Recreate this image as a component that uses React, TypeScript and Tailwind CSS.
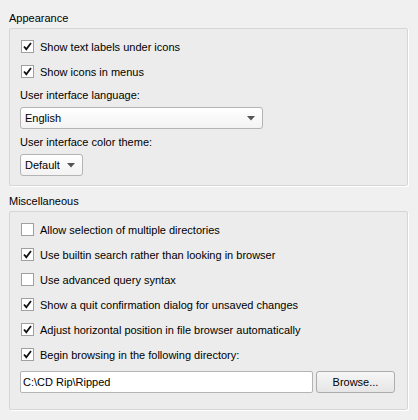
import React from "react";

type Opt = { label: string; checked: boolean };

const misc: Opt[] = [
  { label: "Allow selection of multiple directories", checked: false },
  { label: "Use builtin search rather than looking in browser", checked: true },
  { label: "Use advanced query syntax", checked: false },
  { label: "Show a quit confirmation dialog for unsaved changes", checked: true },
  { label: "Adjust horizontal position in file browser automatically", checked: true },
  { label: "Begin browsing in the following directory:", checked: true },
];

function CheckBox({ label, checked }: Opt) {
  return (
    <label className="flex h-[13px] items-center gap-[6px]">
      <span className="flex h-[13px] w-[13px] shrink-0 items-center justify-center border border-[#a0a0a0] bg-white">
        {checked && (
          <svg width="9" height="9" viewBox="0 0 9 9">
            <path d="M1 4.5 L3.3 7.2 L8 1" fill="none" stroke="#111" strokeWidth="1.8" />
          </svg>
        )}
      </span>
      <span className="whitespace-nowrap">{label}</span>
    </label>
  );
}

function Arrow() {
  return (
    <svg width="8" height="5" viewBox="0 0 8 5">
      <path d="M0 0 H8 L4 4.5 Z" fill="#555" />
    </svg>
  );
}

function Group({ title, children, className }: { title: string; children: React.ReactNode; className?: string }) {
  return (
    <div className="flex flex-col">
      <div className="h-[19px] pl-[9px] leading-[19px]">{title}</div>
      <div
        className={`ml-[9px] mr-[10px] rounded-[2px] border border-[#d6d6d6] bg-[#ececec] px-[11px] shadow-[1px_1px_0_#fff] ${className ?? ""}`}
      >
        {children}
      </div>
    </div>
  );
}

export default function App() {
  return (
    <div
      className="h-[420px] w-[418px] bg-[#f0f0f0] pt-[9px] text-[11px] leading-[14px] text-black"
      style={{ fontFamily: '"Liberation Sans", Arial, sans-serif' }}
    >
      <Group title="Appearance" className="h-[158px] pt-[11px]">
        <div className="flex flex-col gap-[12px]">
          <CheckBox label="Show text labels under icons" checked />
          <CheckBox label="Show icons in menus" checked />
        </div>
        <div className="mt-[10px] ml-[-1px]">User interface language:</div>
        <div className="mt-[5px] ml-[-1px] flex h-[22px] w-[243px] items-center justify-between rounded-[3px] border border-[#b4b4b4] bg-gradient-to-b from-white to-[#f3f3f3] pl-[4px] pr-[7px]">
          <span>English</span>
          <Arrow />
        </div>
        <div className="mt-[6px] ml-[-1px]">User interface color theme:</div>
        <div className="mt-[5px] ml-[-1px] flex h-[22px] w-[63px] items-center justify-between rounded-[3px] border border-[#b4b4b4] bg-gradient-to-b from-white to-[#f3f3f3] pl-[4px] pr-[7px]">
          <span>Default</span>
          <Arrow />
        </div>
      </Group>
      <div className="h-[6px]" />
      <Group title="Miscellaneous" className="h-[199px] pt-[11px]">
        <div className="flex flex-col gap-[12px]">
          {misc.map((o) => (
            <CheckBox key={o.label} {...o} />
          ))}
        </div>
        <div className="mt-[10px] ml-[-1px] flex gap-[3px]">
          <div className="flex h-[22px] w-[293px] items-center rounded-[2px] border border-[#b4b4b4] bg-white pl-[2px]">
            C:\CD Rip\Ripped
          </div>
          <button className="h-[22px] w-[79px] rounded-[3px] border border-[#adadad] bg-gradient-to-b from-[#f6f6f6] to-[#e6e6e6] text-[11px]">
            Browse...
          </button>
        </div>
      </Group>
    </div>
  );
}
